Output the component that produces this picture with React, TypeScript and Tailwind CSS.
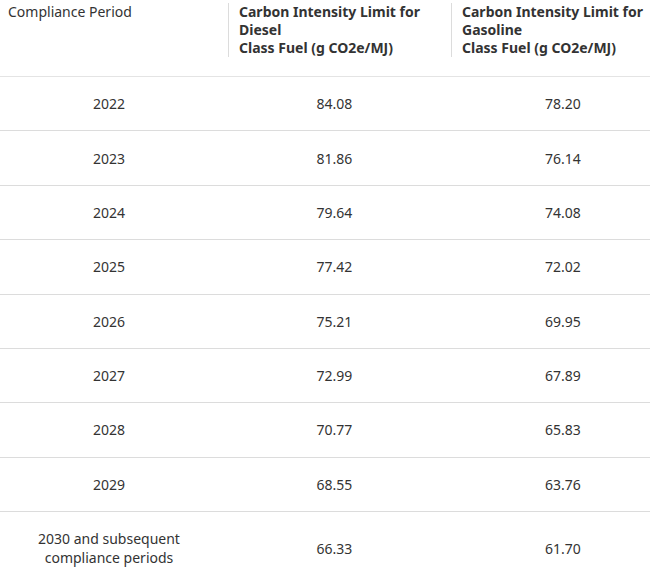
const rows = [
  { period: "2022", diesel: "84.08", gasoline: "78.20" },
  { period: "2023", diesel: "81.86", gasoline: "76.14" },
  { period: "2024", diesel: "79.64", gasoline: "74.08" },
  { period: "2025", diesel: "77.42", gasoline: "72.02" },
  { period: "2026", diesel: "75.21", gasoline: "69.95" },
  { period: "2027", diesel: "72.99", gasoline: "67.89" },
  { period: "2028", diesel: "70.77", gasoline: "65.83" },
  { period: "2029", diesel: "68.55", gasoline: "63.76" },
];

const App = () => {
  return (
    <div className="w-[650px] overflow-hidden bg-white text-[14px] text-[#333] font-['Noto_Sans',sans-serif]">
      <table className="w-[685px] table-fixed border-collapse">
        <colgroup>
          <col className="w-[228px]" />
          <col className="w-[223px]" />
          <col className="w-[234px]" />
        </colgroup>
        {/* Header */}
        <thead>
          <tr className="border-b border-[#e4e4e4] align-top">
            <th className="pl-2 pt-[3px] pb-[19px] text-left font-normal leading-[18px]">
              Compliance Period
            </th>
            <th className="pt-[3px] pb-[19px] text-left font-bold leading-[18px]">
              <div className="border-l border-[#dcdcdc] pl-[10px] pr-2">
                Carbon Intensity Limit for Diesel
                <br />
                Class Fuel (g CO2e/MJ)
              </div>
            </th>
            <th className="pt-[3px] pb-[19px] text-left font-bold leading-[18px]">
              <div className="w-[220px] border-l border-[#dcdcdc] pl-[10px] pr-2">
                Carbon Intensity Limit for Gasoline
                <br />
                Class Fuel (g CO2e/MJ)
              </div>
            </th>
          </tr>
        </thead>
        <tbody>
          {rows.map((r) => (
            <tr key={r.period} className="border-b border-[#dcdcdc] text-center leading-[19px]">
              <td className="py-[17.2px] pr-[10px]">{r.period}</td>
              <td className="py-[17.2px] pr-[10px]">{r.diesel}</td>
              <td className="py-[17.2px] pr-[10px]">{r.gasoline}</td>
            </tr>
          ))}
          <tr className="border-b border-[#dcdcdc] text-center leading-[19px]">
            <td className="py-[17.2px] pr-[10px]">
              2030 and subsequent
              <br />
              compliance periods
            </td>
            <td className="py-[17.2px] pr-[10px]">66.33</td>
            <td className="py-[17.2px] pr-[10px]">61.70</td>
          </tr>
        </tbody>
      </table>
    </div>
  );
};

export default App;
